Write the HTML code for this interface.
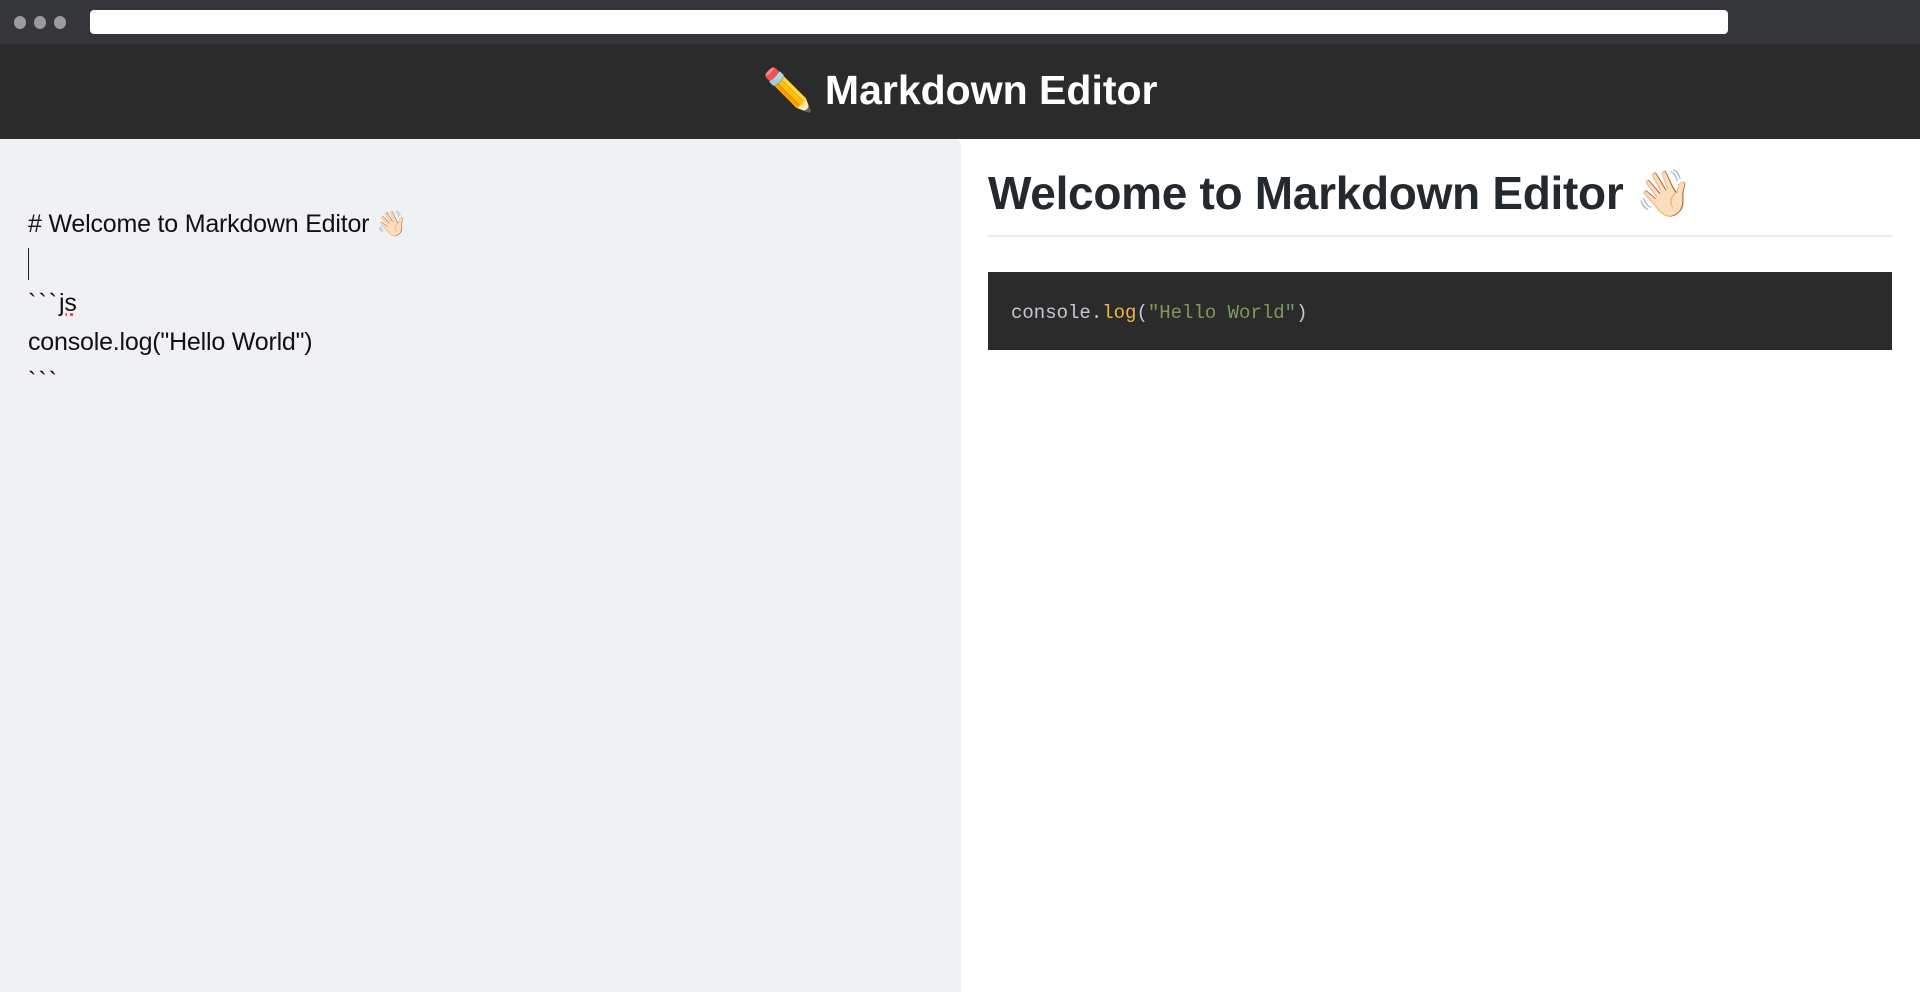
<!DOCTYPE html>
<html><head><meta charset="utf-8"><style>
*{margin:0;padding:0;box-sizing:border-box}
body{width:1920px;height:992px;overflow:hidden;background:#fff;font-family:"Liberation Sans","Noto Sans CJK JP",sans-serif;position:relative}
.top{position:absolute;left:0;top:0;width:1920px;height:44px;background:#35363a}
.dot{position:absolute;top:16px;width:12px;height:13px;border-radius:50%;background:#9b9b9e}
.url{position:absolute;left:90px;top:10px;width:1638px;height:24px;background:#fff;border-radius:4px}
.hdr{position:absolute;left:0;top:44px;width:1920px;height:95px;background:#2b2b2b;color:#fff;font-weight:bold;font-size:41px;text-align:center;line-height:92px}
.left{position:absolute;left:0;top:139px;width:961px;height:853px;background:#f0f1f5;border-top-right-radius:6px}
.lt{position:absolute;left:28px;font-size:25px;color:#111;letter-spacing:-0.2px;white-space:pre}
.caret{position:absolute;left:28px;top:248px;width:1px;height:32px;background:#222}
.h1{position:absolute;left:988px;top:166px;font-size:46px;color:#24292e;font-weight:bold;letter-spacing:-0.3px}
.hr{position:absolute;left:988px;top:235px;width:904px;height:2px;background:#eaecef}
.code{position:absolute;left:988px;top:272px;width:904px;height:78px;background:#2b2b2b;font-family:"Liberation Mono","DejaVu Sans Mono",monospace;font-size:19px;line-height:82px;padding-left:23px;color:#c5c8d0}
</style></head><body>
<div class="top"><div class="dot" style="left:14px"></div><div class="dot" style="left:34px"></div><div class="dot" style="left:54px"></div><div class="url"></div></div>
<div class="hdr">✏️ Markdown Editor</div>
<div class="left"></div>
<div class="lt" style="top:210px"># Welcome to Markdown Editor 👋🏻</div>
<div class="caret"></div>
<div class="lt" style="top:289px;letter-spacing:2px">&#96;&#96;&#96;<span style="text-decoration:underline dotted #e33;letter-spacing:-0.2px">js</span></div>
<div class="lt" style="top:328px">console.log("Hello World")</div>
<div class="lt" style="top:367px;letter-spacing:2px">&#96;&#96;&#96;</div>
<div class="h1">Welcome to Markdown Editor 👋🏻</div>
<div class="hr"></div>
<div class="code">console.<span style="color:#f0b44c">log</span>(<span style="color:#7c9a5c">"Hello World"</span>)</div>
</body></html>
